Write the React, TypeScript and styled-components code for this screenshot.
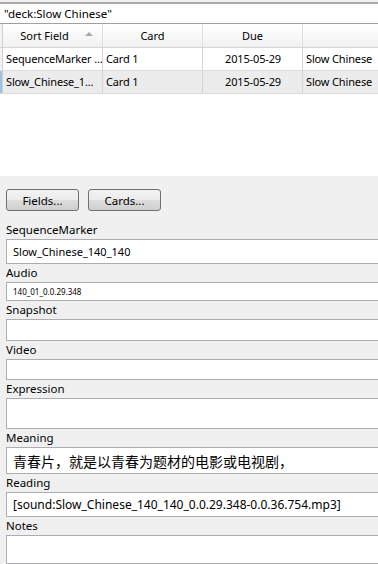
import React from "react";
import styled, { createGlobalStyle } from "styled-components";

const GlobalStyle = createGlobalStyle`
  html, body {
    margin: 0;
    padding: 0;
    background: #f0f0f0;
  }
  body {
    font-family: "Noto Sans", "Liberation Sans", "Noto Sans CJK SC", sans-serif;
    font-size: 11px;
    color: #000;
  }
`;

const Window = styled.div`
  width: 378px;
  height: 564px;
  overflow: hidden;
  background: #f0f0f0;
  display: flex;
  flex-direction: column;
`;

const SearchBox = styled.div`
  margin-top: 2px;
  height: 19px;
  border-top: 2px solid #a9a9a9;
  background: #fff;
  padding: 0 4px;
  display: flex;
  align-items: center;
  font-size: 11.5px;
  white-space: nowrap;
`;

const Browser = styled.div`
  height: 153px;
  background: #fff;
  border-top: 1px solid #a0a0a0;
  overflow: hidden;
`;

const GridRow = styled.div<{ $alt?: boolean; $head?: boolean }>`
  display: grid;
  grid-template-columns: 3px 100px 100px 100px 100px;
  height: ${(p) => (p.$head ? 23 : 22)}px;
  background: ${(p) =>
    p.$head ? "linear-gradient(#ffffff, #f1f1f1)" : p.$alt ? "#ececec" : "#fff"};
  border-bottom: 1px solid ${(p) => (p.$head ? "#d5d5d5" : "#dcdcdc")};
`;

const RowHeader = styled.div<{ $selected?: boolean }>`
  background: ${(p) => (p.$selected ? "#9cc3e5" : "#f3f3f3")};
  border-right: 1px solid #d0d0d0;
`;

const HeadCell = styled.div<{ $sorted?: boolean }>`
  position: relative;
  display: flex;
  align-items: center;
  justify-content: center;
  padding-right: ${(p) => (p.$sorted ? "16px" : "0")};
  border-right: 1px solid #dedede;
  white-space: nowrap;
`;

const SortArrow = styled.span`
  position: absolute;
  right: 9px;
  top: 8px;
  width: 0;
  height: 0;
  border-left: 4px solid transparent;
  border-right: 4px solid transparent;
  border-bottom: 4px solid #a8a8a8;
`;

const Cell = styled.div<{ $center?: boolean }>`
  display: flex;
  align-items: center;
  justify-content: ${(p) => (p.$center ? "center" : "flex-start")};
  padding: 0 2px 0 3px;
  border-right: 1px solid #d6d6d6;
  white-space: nowrap;
  overflow: hidden;
  letter-spacing: -0.15px;
`;

const ButtonRow = styled.div`
  display: flex;
  gap: 9px;
  padding: 13px 6px 0;
  height: 22px;
`;

const PushButton = styled.button`
  width: 73px;
  height: 22px;
  padding: 0;
  border: 1px solid #707070;
  border-radius: 3px;
  background: linear-gradient(#f2f2f2 0%, #ebebeb 50%, #dddddd 51%, #cfcfcf 100%);
  font-family: inherit;
  font-size: 11.5px;
  color: #000;
`;

const Editor = styled.div`
  display: flex;
  flex-direction: column;
  padding: 10px 0 0 6px;
  margin-right: -6px;
`;

const Field = styled.div`
  display: flex;
  flex-direction: column;
`;

const FieldLabel = styled.div`
  height: 18px;
  line-height: 18px;
  font-size: 11.5px;
  white-space: nowrap;
`;

const FieldInput = styled.div<{ $h: number; $size?: number }>`
  height: ${(p) => p.$h}px;
  box-sizing: border-box;
  background: #fff;
  border: 1px solid #abadb3;
  display: flex;
  align-items: center;
  padding: 0 6px;
  font-size: ${(p) => p.$size ?? 11}px;
  white-space: nowrap;
  overflow: hidden;
`;

const columns = ["Sort Field", "Card", "Due", ""];

const rows = [
  ["SequenceMarker ...", "Card 1", "2015-05-29", "Slow Chinese"],
  ["Slow_Chinese_1...", "Card 1", "2015-05-29", "Slow Chinese"],
];

const fields: { name: string; h: number; value?: string; size?: number }[] = [
  { name: "SequenceMarker", h: 25, value: "Slow_Chinese_140_140", size: 11 },
  { name: "Audio", h: 19, value: "140_01_0.0.29.348", size: 8 },
  { name: "Snapshot", h: 22 },
  { name: "Video", h: 21 },
  { name: "Expression", h: 31 },
  { name: "Meaning", h: 27, value: "青春片，就是以青春为题材的电影或电视剧，", size: 14 },
  { name: "Reading", h: 25, value: "[sound:Slow_Chinese_140_140_0.0.29.348-0.0.36.754.mp3]", size: 12 },
  { name: "Notes", h: 29 },
];

export default function App() {
  return (
    <>
      <GlobalStyle />
      <Window>
        <SearchBox>"deck:Slow Chinese"</SearchBox>
        <Browser>
          <GridRow $head>
            <RowHeader />
            {columns.map((c, i) => (
              <HeadCell key={i} $sorted={i === 0}>
                {c}
                {i === 0 && <SortArrow />}
              </HeadCell>
            ))}
          </GridRow>
          {rows.map((r, ri) => (
            <GridRow key={ri} $alt={ri === 1}>
              <RowHeader $selected={ri === 1} />
              {r.map((v, ci) => (
                <Cell key={ci} $center={ci === 2}>
                  {v}
                </Cell>
              ))}
            </GridRow>
          ))}
        </Browser>
        <ButtonRow>
          <PushButton>Fields...</PushButton>
          <PushButton>Cards...</PushButton>
        </ButtonRow>
        <Editor>
          {fields.map((f) => (
            <Field key={f.name}>
              <FieldLabel>{f.name}</FieldLabel>
              <FieldInput $h={f.h} $size={f.size}>
                {f.value}
              </FieldInput>
            </Field>
          ))}
        </Editor>
      </Window>
    </>
  );
}
